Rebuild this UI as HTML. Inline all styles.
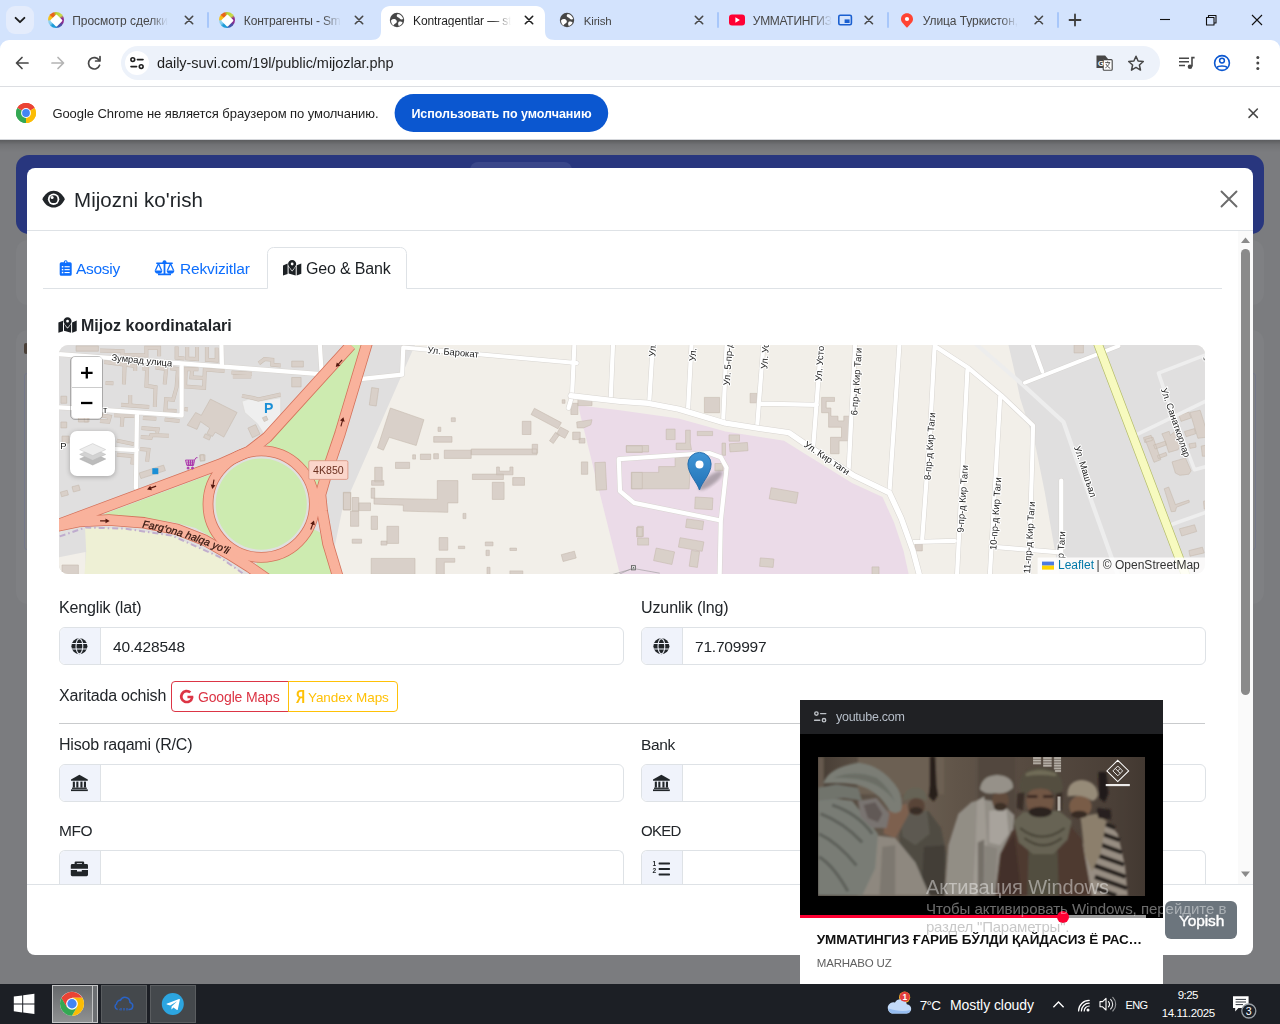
<!DOCTYPE html>
<html><head><meta charset="utf-8">
<title>Kontragentlar</title>
<style>
*{box-sizing:border-box;margin:0;padding:0}
html,body{width:1280px;height:1024px;overflow:hidden;background:#7b7c7f;font-family:"Liberation Sans",sans-serif;}
.a{position:absolute}
.t{position:absolute;white-space:pre;line-height:1;z-index:5}
svg{position:absolute;overflow:visible}
#tabbar{left:0;top:0;width:1280px;height:52px;background:#d3e3fd}
#toolbar{left:0;top:40px;width:1280px;height:47px;background:#fff;border-bottom:1px solid #dcdee2;border-radius:9px 9px 0 0}
#omni{left:121px;top:46px;width:1039px;height:34px;border-radius:17px;background:#edf2fa}
#infobar{left:0;top:87px;width:1280px;height:53px;background:#fff;border-bottom:1px solid #d5d7db}
#page{left:0;top:140px;width:1280px;height:844px;background:#7b7c7f;overflow:hidden}
#taskbar{left:0;top:984px;width:1280px;height:40px;background:#1c1f25}
.tabfade{-webkit-mask-image:linear-gradient(90deg,#000 0,#000 82%,transparent 100%);mask-image:linear-gradient(90deg,#000 0,#000 82%,transparent 100%)}
.tabfade2{-webkit-mask-image:linear-gradient(90deg,#000 0,#000 78%,transparent 100%);mask-image:linear-gradient(90deg,#000 0,#000 78%,transparent 100%)}
.sep{position:absolute;top:12px;width:2px;height:16px;background:#a8c7fa;border-radius:1px}
.fav{position:absolute;width:16px;height:16px;border-radius:50%;top:12px;background:conic-gradient(from 0deg,#b5d334 0deg,#c8dc4a 50deg,#8e2a8e 75deg,#8e2a8e 110deg,#4a4fa6 135deg,#3b5db5 165deg,#1d9cd8 185deg,#1d9cd8 215deg,#7ecbf0 235deg,#8fd3f2 262deg,#f5c018 275deg,#f5c018 300deg,#e8641b 315deg,#e8641b 340deg,#b5d334 360deg)}
.fav:after{content:"";position:absolute;left:3.6px;top:3.6px;width:8.8px;height:8.8px;background:#fff;transform:rotate(45deg);border-radius:1px}
</style></head><body>
<!-- ===== CHROME UI ===== -->
<div class="a" id="tabbar"></div>
<div class="a" id="toolbar"></div>
<div class="a" id="omni"></div>
<div class="a" id="infobar"></div>
<!-- tab search button -->
<div class="a" style="left:6px;top:6px;width:28px;height:28px;border-radius:9px;background:#e4ecfc"></div>
<svg style="left:0;top:0" width="1280" height="140" viewBox="0 0 1280 140">
 <!-- tab search chevron -->
 <path d="M15.6 17.8 L20 22.2 L24.4 17.8" fill="none" stroke="#1f1f1f" stroke-width="1.9" stroke-linecap="round" stroke-linejoin="round"/>
 <!-- active tab -->
 <path d="M371 40 C378 40 381 37 381 31 L381 15 C381 9.5 385 6 390 6 L536 6 C541 6 545 9.5 545 15 L545 31 C545 37 548 40 555 40 Z" fill="#fff"/>
 <!-- tab close X -->
 <g stroke="#474747" stroke-width="1.6" stroke-linecap="round" fill="none">
  <path d="M185.3 16.3 l7.4 7.4 m0 -7.4 l-7.4 7.4"/>
  <path d="M355.3 16.3 l7.4 7.4 m0 -7.4 l-7.4 7.4"/>
  <path d="M695.3 16.3 l7.4 7.4 m0 -7.4 l-7.4 7.4"/>
  <path d="M865.1 16.3 l7.4 7.4 m0 -7.4 l-7.4 7.4"/>
  <path d="M1035.1 16.3 l7.4 7.4 m0 -7.4 l-7.4 7.4"/>
 </g>
 <path d="M525.3 16.3 l7.4 7.4 m0 -7.4 l-7.4 7.4" stroke="#1f1f1f" stroke-width="1.6" stroke-linecap="round" fill="none"/>
 <!-- new tab plus -->
 <path d="M1069.5 20 h11 M1075 14.5 v11" stroke="#3c3c3c" stroke-width="1.8" stroke-linecap="round" fill="none"/>
 <!-- window controls -->
 <path d="M1160 19.5 h10" stroke="#111" stroke-width="1.1" fill="none"/>
 <path d="M1206.5 17.5 h7.5 v7.5 h-7.5 z M1208.5 17.3 v-1.8 h7.5 v7.5 h-1.8" stroke="#111" stroke-width="1.1" fill="none" stroke-linejoin="round"/>
 <path d="M1252 15 l10 10 m0 -10 l-10 10" stroke="#111" stroke-width="1.1" fill="none"/>
 <!-- globe favicons (active + Kirish) -->
 <g id="globe1" transform="translate(397,20)">
  <circle r="7.2" fill="#474747"/>
  <path d="M-5.9 0.2 C-4.2 -1.6 -1.6 -1.4 -0.6 0.2 C0.4 1.8 -0.4 2.8 -1.6 3.4 C-2.8 4 -3.2 5 -3.6 5.6 C-5.2 4.2 -6.1 2.2 -5.9 0.2 Z" fill="#fff"/>
  <path d="M0.8 -6.1 C3.6 -5.8 5.7 -3.7 6.1 -1 C5 -0.1 3.5 -0.5 2.7 -1.6 C1.9 -2.8 0.5 -2.5 -0.1 -3.6 C-0.6 -4.6 0 -5.6 0.8 -6.1 Z" fill="#fff"/>
  <path d="M2 1.6 C3.4 1.2 5 1.8 5.6 2.8 C4.8 4.4 3.4 5.6 1.8 6 C0.8 4.8 0.8 2.6 2 1.6 Z" fill="#fff"/>
 </g>
 <use href="#globe1" x="170" y="0"/>
 <!-- youtube favicon -->
 <rect x="729" y="14.4" width="16" height="11.2" rx="3" fill="#ff0033"/>
 <path d="M735.4 17.2 L739.9 20 L735.4 22.8 Z" fill="#fff"/>
 <!-- PiP indicator -->
 <rect x="838.8" y="15.3" width="12.6" height="9.4" rx="1.4" fill="none" stroke="#1a5fd0" stroke-width="1.6"/>
 <rect x="844.6" y="19.4" width="5" height="3.6" fill="#1a5fd0"/>
 <!-- yandex maps pin -->
 <path d="M907 13.2 C903.6 13.2 901 15.8 901 19 C901 22.2 903.6 23.8 907 27.8 C910.4 23.8 913 22.2 913 19 C913 15.8 910.4 13.2 907 13.2 Z" fill="#ff4433"/>
 <circle cx="907" cy="19" r="2.1" fill="#fff"/>
 <!-- toolbar nav -->
 <path d="M28 63 H17 M22 57.5 L16.5 63 L22 68.5" stroke="#474747" stroke-width="1.7" fill="none" stroke-linecap="round" stroke-linejoin="round"/>
 <path d="M52 63 H63 M58 57.5 L63.5 63 L58 68.5" stroke="#b4b4b4" stroke-width="1.7" fill="none" stroke-linecap="round" stroke-linejoin="round"/>
 <path d="M99.2 60.5 A5.7 5.7 0 1 0 99.6 65.2" stroke="#474747" stroke-width="1.7" fill="none" stroke-linecap="round"/>
 <path d="M100 56.6 V61 H95.6" stroke="#474747" stroke-width="1.7" fill="none" stroke-linecap="round" stroke-linejoin="round"/>
 <!-- site info -->
 <circle cx="137" cy="63" r="12" fill="#fff"/>
 <g stroke="#1f1f1f" stroke-width="1.6" fill="none" stroke-linecap="round">
  <circle cx="132.8" cy="59.6" r="1.9"/><path d="M137.4 59.6 H143"/>
  <circle cx="141.2" cy="66.6" r="1.9"/><path d="M131 66.6 H136.6"/>
 </g>
 <!-- translate icon -->
 <g>
  <path d="M1096.5 55.6 h8.6 l2.4 2.6 v9.8 h-11 z" fill="#474747"/>
  <rect x="1103.2" y="59.6" width="9" height="10.6" rx="1" fill="#fff" stroke="#474747" stroke-width="1.1"/>
  <text x="1098" y="65.6" font-size="7.5" font-weight="700" fill="#fff" font-family="Liberation Sans">G</text>
  <path d="M1105.2 62.6 h5 M1107.7 61.4 v1.2 M1109.4 62.8 c-0.6 2.4 -2.2 4 -4 5 M1106 64 c0.8 1.8 2.2 3.2 4.2 4.4" stroke="#474747" stroke-width="0.9" fill="none"/>
 </g>
 <!-- star -->
 <path d="M1136 56.2 L1138.1 61 L1143.3 61.5 L1139.4 65 L1140.5 70.1 L1136 67.4 L1131.5 70.1 L1132.6 65 L1128.7 61.5 L1133.9 61 Z" fill="none" stroke="#474747" stroke-width="1.5" stroke-linejoin="round"/>
 <!-- media control -->
 <g stroke="#474747" stroke-width="1.5" fill="none">
  <path d="M1179 58.2 h10 M1179 61.8 h10 M1179 65.4 h6"/>
  <path d="M1192 66.6 V57.6 h2.6" stroke-width="1.6"/>
 </g>
 <circle cx="1190" cy="66.8" r="2.3" fill="#474747"/>
 <!-- profile -->
 <circle cx="1222" cy="63" r="7.4" fill="none" stroke="#0b57d0" stroke-width="1.6"/>
 <circle cx="1222" cy="60.6" r="2.4" fill="none" stroke="#0b57d0" stroke-width="1.5"/>
 <path d="M1216.8 67.6 C1218.4 65.4 1225.6 65.4 1227.2 67.6" fill="none" stroke="#0b57d0" stroke-width="1.5"/>
 <!-- menu dots -->
 <circle cx="1257.8" cy="57.6" r="1.5" fill="#474747"/><circle cx="1257.8" cy="63" r="1.5" fill="#474747"/><circle cx="1257.8" cy="68.4" r="1.5" fill="#474747"/>
 <!-- chrome logo infobar -->
 <g transform="translate(26,113)">
  <circle r="10" fill="#fff"/>
  <path d="M0 0 L-8.66 -5 A10 10 0 0 1 8.66 -5 Z" fill="#ea4335"/>
  <path d="M0 0 L8.66 -5 A10 10 0 0 1 0 10 Z" fill="#fbbc04"/>
  <path d="M0 0 L0 10 A10 10 0 0 1 -8.66 -5 Z" fill="#34a853"/>
  <path d="M-8.66 -5 A10 10 0 0 1 8.66 -5 L0 -5 Z" fill="#ea4335"/>
  <path d="M8.66 -5 A10 10 0 0 1 0 10 L4.33 2.5 Z" fill="#fbbc04"/>
  <path d="M0 10 A10 10 0 0 1 -8.66 -5 L-4.33 2.5 Z" fill="#34a853"/>
  <circle r="4.9" fill="#fff"/>
  <circle r="3.9" fill="#4285f4"/>
 </g>
 <!-- infobar button -->
 <rect x="394.6" y="94" width="213.6" height="38" rx="19" fill="#0b57d0"/>
 <!-- infobar close -->
 <path d="M1249 109 l8.4 8.4 m0 -8.4 l-8.4 8.4" stroke="#474747" stroke-width="1.5" stroke-linecap="round" fill="none"/>
</svg>
<div class="sep" style="left:207px"></div>
<div class="sep" style="left:717px"></div>
<div class="sep" style="left:887px"></div>
<div class="sep" style="left:1057px"></div>
<div class="fav" style="left:48px"></div>
<div class="fav" style="left:219px"></div>
<div class="t tabfade" style="left:72.2px;top:15.00px;font-size:12.0px;color:#474747;letter-spacing:-0.038px;">Просмотр сделки</div>
<div class="t tabfade" style="left:243.8px;top:15.00px;font-size:12.0px;color:#474747;letter-spacing:-0.159px;">Контрагенты - Sm</div>
<div class="t tabfade" style="left:413.0px;top:15.00px;font-size:12.0px;color:#1f1f1f;letter-spacing:-0.087px;">Kontragentlar — st</div>
<div class="t" style="left:583.8px;top:16.00px;font-size:11.5px;color:#474747;letter-spacing:-0.194px;">Kirish</div>
<div class="t tabfade2" style="left:752.8px;top:15.00px;font-size:12.0px;color:#474747;letter-spacing:-0.279px;">УММАТИНГИЗ</div>
<div class="t tabfade" style="left:922.8px;top:15.00px;font-size:12.0px;color:#474747;letter-spacing:-0.085px;">Улица Туркистон,</div>
<div class="t" style="left:157.0px;top:56.00px;font-size:14.5px;color:#1f1f1f;letter-spacing:-0.051px;">daily-suvi.com/19l/public/mijozlar.php</div>
<div class="t" style="left:52.4px;top:107.00px;font-size:13.0px;color:#1f1f1f;letter-spacing:-0.057px;">Google Chrome не является браузером по умолчанию.</div>
<div class="t" style="left:411.4px;top:108.00px;font-size:12.5px;color:#ffffff;font-weight:700;letter-spacing:-0.045px;">Использовать по умолчанию</div>
<div class="t" style="left:73.8px;top:190.00px;font-size:20.5px;color:#212529;letter-spacing:0.054px;will-change:transform;">Mijozni ko'rish</div>
<div class="t" style="left:76.0px;top:261.00px;font-size:15.5px;color:#0d6efd;letter-spacing:-0.292px;will-change:transform;">Asosiy</div>
<div class="t" style="left:179.5px;top:261.00px;font-size:15.5px;color:#0d6efd;letter-spacing:-0.154px;will-change:transform;">Rekvizitlar</div>
<div class="t" style="left:305.8px;top:261.00px;font-size:16.0px;color:#1b1f23;letter-spacing:-0.178px;will-change:transform;">Geo &amp; Bank</div>
<div class="t" style="left:81.2px;top:318.00px;font-size:16.0px;color:#212529;font-weight:700;letter-spacing:0.028px;will-change:transform;">Mijoz koordinatalari</div>
<div class="t" style="left:58.9px;top:600.00px;font-size:16.0px;color:#212529;letter-spacing:-0.153px;will-change:transform;">Kenglik (lat)</div>
<div class="t" style="left:641.0px;top:600.00px;font-size:16.0px;color:#212529;letter-spacing:-0.109px;will-change:transform;">Uzunlik (lng)</div>
<div class="t" style="left:112.8px;top:639.00px;font-size:15.5px;color:#212529;letter-spacing:-0.153px;will-change:transform;">40.428548</div>
<div class="t" style="left:695.0px;top:639.00px;font-size:15.5px;color:#212529;letter-spacing:-0.209px;will-change:transform;">71.709997</div>
<div class="t" style="left:58.9px;top:688.00px;font-size:16.0px;color:#212529;letter-spacing:-0.213px;will-change:transform;">Xaritada ochish</div>
<div class="t" style="left:198.0px;top:690.00px;font-size:14.0px;color:#dc3545;letter-spacing:-0.153px;will-change:transform;">Google Maps</div>
<div class="t" style="left:308.2px;top:691.00px;font-size:13.5px;color:#ffc107;letter-spacing:-0.069px;will-change:transform;">Yandex Maps</div>
<div class="t" style="left:58.9px;top:737.00px;font-size:16.0px;color:#212529;letter-spacing:-0.201px;will-change:transform;">Hisob raqami (R/C)</div>
<div class="t" style="left:641.0px;top:737.00px;font-size:15.5px;color:#212529;letter-spacing:-0.382px;will-change:transform;">Bank</div>
<div class="t" style="left:58.9px;top:823.00px;font-size:15.5px;color:#212529;letter-spacing:-0.379px;will-change:transform;">MFO</div>
<div class="t" style="left:641.0px;top:823.00px;font-size:15.0px;color:#212529;letter-spacing:-0.727px;will-change:transform;">OKED</div>
<div class="t" style="left:1179.0px;top:913.00px;font-size:15.5px;color:#ffffff;letter-spacing:-0.128px;will-change:transform;z-index:5;-webkit-text-stroke:0.4px #fff;">Yopish</div>
<div class="t" style="left:836.0px;top:711.00px;font-size:12.5px;color:#b6bec8;letter-spacing:-0.261px;z-index:9;">youtube.com</div>
<div class="t" style="left:816.8px;top:933.00px;font-size:13.5px;color:#0f0f0f;font-weight:700;letter-spacing:-0.102px;z-index:9;">УММАТИНГИЗ ҒАРИБ БЎЛДИ ҚАЙДАСИЗ Ё РАС…</div>
<div class="t" style="left:816.8px;top:958.00px;font-size:11.5px;color:#606060;letter-spacing:-0.198px;z-index:9;">MARHABO UZ</div>
<div class="t" style="left:925.6px;top:877.00px;font-size:20.0px;color:rgba(255,255,255,0.44);letter-spacing:-0.090px;will-change:transform;z-index:12;">Активация Windows</div>
<div class="t" style="left:925.6px;top:901.00px;font-size:15.0px;color:rgba(255,255,255,0.42);letter-spacing:-0.032px;will-change:transform;z-index:12;">Чтобы активировать Windows, перейдите в</div>
<div class="t" style="left:925.6px;top:919.00px;font-size:15.0px;color:rgba(150,150,150,0.52);letter-spacing:-0.219px;will-change:transform;z-index:12;">раздел "Параметры".</div>
<div class="t" style="left:919.7px;top:999.00px;font-size:13.5px;color:#ffffff;letter-spacing:-0.620px;z-index:12;">7°C</div>
<div class="t" style="left:950.0px;top:998.00px;font-size:14.0px;color:#ffffff;letter-spacing:-0.062px;z-index:12;">Mostly cloudy</div>
<div class="t" style="left:1125.5px;top:1000.00px;font-size:11.0px;color:#ffffff;letter-spacing:-0.583px;z-index:12;">ENG</div>
<div class="t" style="left:1177.7px;top:990.00px;font-size:11.5px;color:#ffffff;letter-spacing:-0.522px;z-index:12;">9:25</div>
<div class="t" style="left:1161.7px;top:1008.00px;font-size:11.5px;color:#ffffff;letter-spacing:-0.351px;z-index:12;">14.11.2025</div>
<!-- ===== PAGE (dimmed) + MODAL ===== -->
<div class="a" id="page">
 <div class="a" style="left:0;top:0;width:1280px;height:12px;background:linear-gradient(180deg,rgba(0,0,0,0.26),rgba(0,0,0,0.08) 40%,rgba(0,0,0,0));z-index:1"></div>
 <!-- dimmed page behind: header bar + cards -->
 <div class="a" style="left:16px;top:15px;width:1248px;height:79px;border-radius:13px;background:#28367e"></div>
 <div class="a" style="left:470px;top:22px;width:102px;height:30px;border-radius:8px;background:#3a478a"></div>
 <div class="a" style="left:16px;top:100px;width:1248px;height:65px;border-radius:12px;background:#7f8083"></div>
 <div class="a" style="left:16px;top:190px;width:1248px;height:274px;border-radius:12px;background:#7f8083"></div>
 <div class="a" style="left:24px;top:233px;width:1232px;height:177px;border:1px solid #75788a;border-radius:3px"></div>
 <div class="a" style="left:24px;top:203px;width:4px;height:11px;background:#4a4038;border-radius:2px"></div>
 <!-- modal -->
 <div class="a" id="modal" style="left:27px;top:28px;width:1226px;height:787px;background:#fff;border-radius:8px;overflow:hidden">
  <div class="a" style="left:0;top:62px;width:1226px;height:1px;background:#dee2e6"></div>
  <div class="a" style="left:0;top:715.5px;width:1226px;height:1px;background:#dee2e6"></div>
  <!-- scroll track -->
  <div class="a" style="left:1211px;top:63px;width:15px;height:652.5px;background:#fafafa"></div>
  <div class="a" style="left:1214px;top:81px;width:9px;height:446px;border-radius:5px;background:#8a8a8a"></div>
 </div>
</div>
<svg style="left:0;top:0;z-index:4" width="1280" height="1024" viewBox="0 0 1280 1024">
 <!-- scroll arrows -->
 <path d="M1241 243 L1245.5 237.5 L1250 243 Z" fill="#8a8a8a"/>
 <path d="M1241 871.5 L1245.5 877 L1250 871.5 Z" fill="#8a8a8a"/>
 <!-- modal close -->
 <path d="M1221.5 191.5 l15 15 m0 -15 l-15 15" stroke="#6b6b6b" stroke-width="1.9" fill="none" stroke-linecap="round"/>
 <!-- eye icon -->
 <g transform="translate(53.6,199.2)">
  <path d="M-11.3 0 C-8.8 -5.2 -4.6 -8.4 0 -8.4 C4.6 -8.4 8.8 -5.2 11.3 0 C8.8 5.2 4.6 8.4 0 8.4 C-4.6 8.4 -8.8 5.2 -11.3 0 Z" fill="#212529"/>
  <circle r="5.7" fill="#fff"/><circle r="3.9" fill="#212529"/><circle cx="-1.5" cy="-1.6" r="1.5" fill="#fff"/>
 </g>
 <!-- tabs border -->
 <path d="M43 288.5 H267.5 M406.5 288.5 H1222" stroke="#dee2e6" stroke-width="1" fill="none"/>
 <path d="M267.5 288.5 V253.5 a6 6 0 0 1 6 -6 H400.5 a6 6 0 0 1 6 6 V288.5" stroke="#dee2e6" stroke-width="1" fill="none"/>
 <!-- clipboard icon (Asosiy) -->
 <g fill="#0d6efd">
  <path d="M61.2 262.2 h2.6 a1.9 1.9 0 0 1 2.9 -1.7 a1.9 1.9 0 0 1 0.9 1.7 h2.6 a1.5 1.5 0 0 1 1.5 1.5 v10.6 a1.5 1.5 0 0 1 -1.5 1.5 h-9 a1.5 1.5 0 0 1 -1.5 -1.5 v-10.6 a1.5 1.5 0 0 1 1.5 -1.5 z"/>
 </g>
 <g fill="#fff"><circle cx="65.7" cy="262.1" r="0.8"/>
  <rect x="61.8" y="266" width="1.5" height="1.5"/><rect x="64.5" y="266.2" width="5.2" height="1.1"/>
  <rect x="61.8" y="268.9" width="1.5" height="1.5"/><rect x="64.5" y="269.1" width="5.2" height="1.1"/>
  <rect x="61.8" y="271.8" width="1.5" height="1.5"/><rect x="64.5" y="272" width="5.2" height="1.1"/>
 </g>
 <!-- balance scale (Rekvizitlar) -->
 <g fill="#0d6efd" stroke="none">
  <rect x="163.6" y="261" width="1.8" height="13"/>
  <rect x="158" y="273.4" width="13" height="1.9" rx="0.5"/>
  <rect x="156.2" y="262.4" width="16.6" height="1.7" rx="0.5"/>
  <circle cx="164.5" cy="262.2" r="2"/>
  <path d="M154.6 270.4 h7.8 c0 2 -1.7 3.3 -3.9 3.3 c-2.2 0 -3.9 -1.3 -3.9 -3.3 z"/>
  <path d="M166.6 270.4 h7.8 c0 2 -1.7 3.3 -3.9 3.3 c-2.2 0 -3.9 -1.3 -3.9 -3.3 z"/>
 </g>
 <g fill="none" stroke="#0d6efd" stroke-width="1.3" stroke-linejoin="round">
  <path d="M155.4 270.4 L158.5 263.6 L161.6 270.4"/><path d="M167.4 270.4 L170.5 263.6 L173.6 270.4"/>
 </g>
 <!-- map-marked icon (Geo tab) -->
 <g id="mapicon" transform="translate(283,260)">
  <path d="M0 5.4 L4.6 3.6 V14 L0 15.6 Z" fill="#1b1f23"/>
  <path d="M18.3 3.4 L13.7 5.2 V15.6 L18.3 13.8 Z" fill="#1b1f23"/>
  <path d="M5.6 6.2 C6.4 8 7.8 9.8 9.15 11.4 C10.5 9.8 11.9 8 12.7 6.2 V15.6 L5.6 13.6 Z" fill="#1b1f23"/>
  <path d="M9.15 0 C6.9 0 5.1 1.8 5.1 4 C5.1 5.8 7.6 8.8 9.15 10.4 C10.7 8.8 13.2 5.8 13.2 4 C13.2 1.8 11.4 0 9.15 0 Z M9.15 2.6 a1.4 1.4 0 1 1 0 2.8 a1.4 1.4 0 0 1 0 -2.8 z" fill="#1b1f23" fill-rule="evenodd"/>
 </g>
 <use href="#mapicon" x="-224.6" y="57.2"/>
</svg>
<!-- input groups -->
<style>
.ig{position:absolute;overflow:hidden;height:38px;border:1px solid #dee2e6;border-radius:6px;background:#fff;z-index:3}
.ig i{position:absolute;left:0;top:0;width:41px;height:36px;background:#f0f3fb;border-right:1px solid #dee2e6;border-radius:5px 0 0 5px}
</style>
<div class="ig" style="left:59px;top:627px;width:565px"><i></i></div>
<div class="ig" style="left:640.5px;top:627px;width:565px"><i></i></div>
<div class="ig" style="left:59px;top:764px;width:565px"><i></i></div>
<div class="ig" style="left:640.5px;top:764px;width:565px"><i></i></div>
<div class="ig" style="left:59px;top:850px;width:565px;height:33.6px;border-bottom:0;border-radius:6px 6px 0 0"><i style="border-radius:5px 0 0 0"></i></div>
<div class="ig" style="left:640.5px;top:850px;width:565px;height:33.6px;border-bottom:0;border-radius:6px 6px 0 0"><i style="border-radius:5px 0 0 0"></i></div>
<!-- hr -->
<div class="a" style="left:59px;top:723px;width:1146px;height:1px;background:#c9cbcd;z-index:3"></div>
<!-- map buttons -->
<div class="a" style="left:171px;top:681px;width:118px;height:31px;border:1px solid #dc3545;border-radius:4px 0 0 4px;z-index:3"></div>
<div class="a" style="left:288px;top:681px;width:110px;height:31px;border:1px solid #ffc107;border-radius:0 4px 4px 0;z-index:3"></div>
<!-- Yopish button -->
<div class="a" style="left:1165px;top:901px;width:72px;height:38px;border-radius:6px;background:#6c757d;z-index:3"></div>
<!-- MAP -->
<div class="a" id="map" style="will-change:transform;left:59px;top:345px;width:1146px;height:229px;border-radius:9px;overflow:hidden;background:#f2efe9;z-index:3">
<svg width="1146" height="229" viewBox="0 0 1146 229" style="left:0;top:0">
<polygon points="0,0 356,0 283,166 275,205 278,229 0,229" fill="#e0dfdf"/>
<polygon points="949.4,-0.3 955.3,25.5 961.2,53.6 976.4,100.5 985.8,147.3 995.1,201.2 1001.0,231.7 1155.7,231.7 1155.7,-0.3" fill="#e0dfdf"/>
<polygon points="-4.0,213.0 26.5,207.1 26.5,231.7 -4.0,231.7" fill="#f2efe9"/>
<polygon points="26.0,182.5 66.3,183.7 113.2,190.7 160.1,211.8 188.2,231.7 25.3,231.7 27.2,205.9" fill="#eef0d5"/>
<polygon points="518.9,60.2 561.0,65.3 619.6,73.5 666.5,86.4 725.1,95.8 743.8,107.5 793.0,138.0 823.5,152.0 835.2,177.8 844.6,205.9 850.2,231.7 561.5,231.7" fill="#ebdbe8"/>
<polygon points="44.0,169.6 161.2,125.8 202.2,159.1 160.1,196.6 136.6,183.0 113.2,177.1 78.0,172.4 54.6,170.8" fill="#cdebb0"/>
<polygon points="205.3,103.3 291.8,-0.3 307.7,-0.3 281.0,88.7 263.2,147.3 202.2,159.1" fill="#cdebb0"/>
<polygon points="202.2,159.1 260.8,187.2 274.9,231.7 210.5,231.7 197.6,220.0" fill="#cdebb0"/>
<polygon points="183.0,56.3 190.1,54.1 199.9,56.3 221.7,52.7 221.7,76.6 205.5,90.0 198.5,78.8 185.8,67.5" fill="#efefef" stroke="#d9d6d3" stroke-width="0.5"/>
<path d="M41.0 5.6 L63.5 6.3 L63.5 9.8 L87.4 10.5 L87.4 2.8 L100.1 2.8 L100.1 11.3  M117.6 1.4 L117.6 12.7 L125.4 13.4  M128.2 2.1 L128.2 13.4 L138.0 14.1 L138.0 2.1  M147.9 2.1 L147.9 14.8 L157.7 15.5 L157.7 2.8  M45.2 16.9 L76.2 21.1 L76.2 26.0  M65.6 21.1 L64.9 39.4  M46.6 38.0 L54.4 38.3  M83.2 23.2 L88.1 23.9 L87.4 40.8 L96.5 42.2 L95.8 61.9  M96.5 22.5 L107.1 23.9 L105.7 39.4  M111.3 23.2 L119.0 23.9 L117.6 42.2 L114.1 54.8 L107.1 54.1 L106.4 65.4 L117.6 66.1  M71.2 49.9 L71.2 59.1  M62.1 59.8 L90.2 61.9  M165.5 26.0 L145.8 24.6 L145.1 42.9 L126.1 41.5 L126.8 23.9 L139.4 24.2  M133.1 25.3 L132.4 32.3 L145.1 33.0  M172.5 27.4 L192.9 28.8  M173.9 31.6 L192.2 31.6  M199.9 18.3 L205.5 14.1 L213.3 14.8 L213.3 19.7 L221.7 20.4  M125.4 64.0 L128.9 64.4  M41.0 70.3 L50.8 71.7 L49.4 76.6 L41.0 75.9  M55.1 70.3 L76.2 71.0  M63.5 71.7 L62.8 81.6  M83.9 73.1 L97.3 73.8  M105.7 74.5 L120.5 75.9  M82.5 83.0 L98.7 84.4 L98.0 87.9  M81.8 92.1 L91.6 92.8 L92.3 90.0 L109.9 90.7  M57.9 95.6 L74.8 99.1  M81.1 104.1 L89.5 104.8 L88.1 116.7  M57.9 109.7 L74.0 111.1 L73.3 119.5  M183.0 50.9 L194.3 53.0 L199.2 54.4 L221.7 49.5 " fill="none" stroke="#c9beb3" stroke-width="4.0" stroke-linejoin="miter"/>
<path d="M41.0 5.6 L63.5 6.3 L63.5 9.8 L87.4 10.5 L87.4 2.8 L100.1 2.8 L100.1 11.3  M117.6 1.4 L117.6 12.7 L125.4 13.4  M128.2 2.1 L128.2 13.4 L138.0 14.1 L138.0 2.1  M147.9 2.1 L147.9 14.8 L157.7 15.5 L157.7 2.8  M45.2 16.9 L76.2 21.1 L76.2 26.0  M65.6 21.1 L64.9 39.4  M46.6 38.0 L54.4 38.3  M83.2 23.2 L88.1 23.9 L87.4 40.8 L96.5 42.2 L95.8 61.9  M96.5 22.5 L107.1 23.9 L105.7 39.4  M111.3 23.2 L119.0 23.9 L117.6 42.2 L114.1 54.8 L107.1 54.1 L106.4 65.4 L117.6 66.1  M71.2 49.9 L71.2 59.1  M62.1 59.8 L90.2 61.9  M165.5 26.0 L145.8 24.6 L145.1 42.9 L126.1 41.5 L126.8 23.9 L139.4 24.2  M133.1 25.3 L132.4 32.3 L145.1 33.0  M172.5 27.4 L192.9 28.8  M173.9 31.6 L192.2 31.6  M199.9 18.3 L205.5 14.1 L213.3 14.8 L213.3 19.7 L221.7 20.4  M125.4 64.0 L128.9 64.4  M41.0 70.3 L50.8 71.7 L49.4 76.6 L41.0 75.9  M55.1 70.3 L76.2 71.0  M63.5 71.7 L62.8 81.6  M83.9 73.1 L97.3 73.8  M105.7 74.5 L120.5 75.9  M82.5 83.0 L98.7 84.4 L98.0 87.9  M81.8 92.1 L91.6 92.8 L92.3 90.0 L109.9 90.7  M57.9 95.6 L74.8 99.1  M81.1 104.1 L89.5 104.8 L88.1 116.7  M57.9 109.7 L74.0 111.1 L73.3 119.5  M183.0 50.9 L194.3 53.0 L199.2 54.4 L221.7 49.5 " fill="none" stroke="#d9d0c9" stroke-width="3.0" stroke-linejoin="miter"/>
<path d="M17.1 0.9 L39.4 0.9 L39.4 6.2 L17.1 6.2Z M1.9 51.2 L7.7 51.2 L7.7 58.3 L1.9 58.3Z M1.9 77.0 L7.7 77.0 L7.7 82.9 L1.9 82.9Z M19.4 72.3 L28.8 72.3 L28.8 77.0 L19.4 77.0Z M3.0 91.1 L10.1 91.1 L10.1 98.1 L3.0 98.1Z M25.3 65.3 L30.0 65.3 L30.0 77.0 L25.3 77.0Z M284.3 147.3 L291.8 147.3 L291.8 164.9 L284.3 164.9Z M3.0 220.0 L19.4 220.0 L19.4 229.4 L3.0 229.4Z M232.7 16.1 L244.4 16.1 L244.4 22.0 L232.7 22.0Z M232.7 32.5 L242.1 32.5 L242.1 41.9 L232.7 41.9Z M141.3 109.8 L146.0 109.8 L146.0 115.7 L141.3 115.7Z M80.1 128.0 L104.6 120.1 L106.4 125.6 L81.9 133.6Z M13.0 141.8 L19.8 140.0 L21.2 145.2 L14.4 147.0Z M1.4 147.2 L8.2 145.3 L9.4 149.9 L2.6 151.7Z M151.4 54.1 L178.1 67.5 L164.8 92.1 L156.3 87.2 L153.5 91.4 L147.9 88.6 L150.7 83.0 L141.5 76.6 L138.0 84.4 L128.2 80.2 L136.6 67.5 L142.3 70.3Z M188.9 83.1 L196.6 79.6 L201.0 89.1 L193.4 92.7Z M203.4 72.8 L207.3 71.0 L209.0 74.8 L205.2 76.6Z M140.3 110.1 L144.5 109.4 L145.6 115.6 L141.4 116.3Z M146.2 88.8 L151.9 91.5 L150.3 95.1 L144.5 92.4Z M331.4 63.0 L364.9 74.7 L357.2 100.5 L330.2 92.3 L324.4 105.2 L318.5 102.8Z M312.7 42.6 L319.7 43.6 L317.2 61.0 L310.3 60.0Z M374.7 91.6 L393.0 91.6 L393.0 97.2 L374.7 97.2Z M392.3 72.8 L396.3 72.8 L396.3 76.6 L392.3 76.6Z M379.0 82.2 L381.8 82.2 L381.8 86.4 L379.0 86.4Z M385.3 105.2 L412.2 105.2 L412.2 113.4 L385.3 113.4Z M412.2 104.0 L477.9 104.0 L477.9 109.8 L412.2 109.8Z M473.2 99.3 L478.6 99.3 L478.6 108.2 L473.2 108.2Z M353.7 109.8 L356.5 109.8 L356.5 114.1 L353.7 114.1Z M361.4 109.1 L371.7 109.1 L371.7 114.5 L361.4 114.5Z M374.7 108.7 L379.4 108.7 L379.4 113.8 L374.7 113.8Z M336.5 117.3 L350.6 117.3 L350.6 123.4 L336.5 123.4Z M315.7 122.3 L323.2 122.3 L323.2 136.8 L315.7 136.8Z M312.6 135.6 L324.8 135.6 L324.8 140.3 L312.6 140.3Z M312.2 143.1 L315.7 143.1 L315.7 153.2 L312.2 153.2Z M413.4 129.1 L444.4 129.1 L444.4 134.5 L413.4 134.5Z M453.7 132.6 L465.5 132.6 L465.5 140.3 L453.7 140.3Z M433.3 137.3 L445.1 137.3 L445.1 154.4 L433.3 154.4Z M284.5 147.8 L291.5 147.8 L291.5 164.9 L284.5 164.9Z M293.2 152.5 L299.7 152.5 L299.7 166.1 L293.2 166.1Z M299.7 157.9 L311.5 157.9 L311.5 165.6 L299.7 165.6Z M291.5 166.1 L299.7 166.1 L299.7 181.3 L291.5 181.3Z M312.2 171.2 L318.5 171.2 L318.5 184.4 L312.2 184.4Z M327.9 181.3 L339.6 181.3 L339.6 198.4 L327.9 198.4Z M322.0 196.1 L327.9 196.1 L327.9 200.1 L322.0 200.1Z M293.2 194.2 L302.6 194.2 L302.6 198.2 L293.2 198.2Z M380.1 192.6 L388.8 192.6 L388.8 205.2 L380.1 205.2Z M399.4 201.2 L405.7 201.2 L405.7 203.6 L399.4 203.6Z M426.3 197.0 L434.0 197.0 L434.0 200.8 L426.3 200.8Z M427.0 205.2 L430.3 205.2 L430.3 210.6 L427.0 210.6Z M450.9 203.1 L457.5 203.1 L457.5 205.5 L450.9 205.5Z M312.2 213.4 L356.0 213.4 L356.0 229.4 L312.2 229.4Z M428.0 222.3 L431.0 222.3 L431.0 229.4 L428.0 229.4Z M450.9 225.9 L463.8 225.9 L463.8 229.4 L450.9 229.4Z M463.3 76.3 L472.0 76.3 L472.0 89.5 L463.3 89.5Z M511.9 58.3 L518.9 58.3 L518.9 69.5 L511.9 69.5Z M518.9 52.4 L533.0 52.4 L533.0 60.6 L518.9 60.6Z M513.7 87.1 L521.2 87.1 L521.2 94.6 L513.7 94.6Z M520.1 93.4 L525.9 93.4 L525.9 98.1 L520.1 98.1Z M522.4 116.9 L528.7 116.9 L528.7 129.3 L522.4 129.3Z M567.4 100.9 L583.3 100.9 L583.3 107.5 L567.4 107.5Z M572.3 127.4 L583.3 127.4 L583.3 143.8 L572.3 143.8Z M404.0 168.4 L406.9 168.4 L406.9 173.6 L404.0 173.6Z M503.2 54.8 L506.0 54.8 L506.0 58.3 L503.2 58.3Z M577.5 182.5 L583.3 182.5 L583.3 191.9 L577.5 191.9Z M378.3 135.6 L398.9 135.6 L398.9 157.9 L388.8 157.9 L388.8 167.3 L344.3 166.1 L344.3 160.2 L315.0 159.1 L315.0 153.2 L378.3 154.4Z M437.6 122.0 L440.4 122.0 L440.4 126.2 L450.9 126.2 L450.9 122.0 L454.0 122.0 L454.0 129.8 L437.6 129.8Z M377.1 213.4 L395.8 213.4 L395.8 217.2 L385.3 217.2 L385.3 229.4 L377.1 229.4Z M475.4 63.3 L502.3 77.6 L499.0 83.8 L472.1 69.5Z M501.4 81.9 L509.7 86.3 L505.9 93.3 L497.6 88.9Z M496.6 87.2 L500.4 89.9 L494.3 98.5 L490.5 95.8Z M502.3 209.7 L515.4 206.2 L517.2 213.0 L504.1 216.5Z M535.8 117.6 L546.3 117.1 L547.7 144.7 L537.2 145.3Z M517.7 77.0 L524.7 75.9 L533.0 74.7 L531.8 79.8 L524.7 82.9 L518.2 82.9Z M645.4 52.4 L660.6 52.4 L660.6 67.7 L645.4 67.7Z M691.1 48.4 L698.1 48.4 L698.1 57.8 L691.1 57.8Z M607.2 84.1 L616.1 84.1 L616.1 94.6 L607.2 94.6Z M638.3 86.4 L653.6 86.4 L653.6 90.6 L638.3 90.6Z M670.0 89.9 L680.5 89.9 L680.5 96.2 L670.0 96.2Z M663.0 98.1 L666.5 98.1 L666.5 110.3 L663.0 110.3Z M567.3 100.5 L589.6 100.5 L589.6 107.0 L567.3 107.0Z M655.9 118.5 L664.1 118.5 L664.1 125.8 L655.9 125.8Z M578.6 181.3 L584.4 181.3 L584.4 191.4 L578.6 191.4Z M578.6 193.0 L589.6 193.0 L589.6 200.1 L578.6 200.1Z M813.0 221.9 L820.0 221.9 L820.0 229.4 L813.0 229.4Z M856.3 198.9 L863.3 198.9 L863.3 205.9 L856.3 205.9Z M617.2 98.1 L626.6 98.1 L626.6 85.2 L631.3 85.2 L631.3 98.1 L632.5 104.7 L617.2 104.7Z M670.4 98.8 L688.4 97.5 L689.0 105.7 L671.0 106.9Z M572.7 127.4 L599.7 127.4 L599.7 121.6 L616.1 121.6 L616.1 112.2 L631.3 112.2 L631.3 122.7 L630.1 143.8 L572.7 143.8Z M636.3 152.0 L653.9 153.0 L653.3 164.7 L635.7 163.7Z M627.8 173.9 L644.7 176.2 L643.5 184.8 L626.6 182.4Z M621.1 192.7 L644.9 196.9 L643.2 206.3 L619.4 202.1Z M597.2 203.0 L615.6 206.9 L612.9 219.5 L594.6 215.6Z M632.5 205.4 L640.6 206.6 L638.4 222.4 L630.2 221.2Z M712.2 142.7 L739.2 147.5 L737.2 158.5 L710.2 153.8Z M701.3 212.9 L714.9 214.0 L714.1 222.4 L700.6 221.3Z M762.6 52.4 L775.5 52.4 L775.5 56.4 L767.2 56.4 L767.2 63.0 L771.9 63.0 L771.9 71.2 L779.0 71.2 L779.0 75.9 L784.8 75.9 L784.8 71.2 L790.7 71.2 L790.7 95.8 L780.1 95.8 L780.1 108.7 L771.5 108.7 L771.5 92.3 L782.5 92.3 L782.5 82.2 L769.6 82.2 L769.6 67.7 L762.6 67.7Z M1015.1 -0.3 L1024.4 -0.3 L1024.4 7.9 L1015.1 7.9Z M1086.1 94.4 L1093.9 92.1 L1101.8 114.6 L1095.0 117.3Z M1084.5 92.6 L1092.1 90.3 L1093.5 95.3 L1085.8 97.5Z M1094.6 100.0 L1106.3 96.2 L1107.4 100.0 L1096.2 104.0Z M1098.4 110.6 L1107.0 107.4 L1107.9 110.6 L1099.5 113.7Z M1102.9 88.8 L1110.1 86.3 L1111.4 90.3 L1118.6 83.6 L1124.3 98.9 L1120.9 101.1 L1119.1 104.7 L1109.7 107.4 L1106.3 96.6Z M1119.8 70.1 L1129.9 67.0 L1132.1 73.0 L1122.0 76.4Z M1131.0 67.4 L1141.1 65.2 L1147.9 86.5 L1147.9 92.1 L1138.9 93.3Z M1125.4 86.5 L1135.5 83.6 L1136.6 88.8 L1127.2 91.7Z M1129.9 98.9 L1136.6 97.8 L1137.1 102.2 L1131.0 103.4Z M1142.2 101.1 L1147.9 100.0 L1147.9 111.2 L1143.4 111.2Z M1113.0 116.9 L1126.5 113.0 L1132.1 125.8 L1129.9 129.2 L1120.9 130.3 L1116.4 128.1Z M1105.2 143.8 L1109.7 142.0 L1116.4 159.6 L1129.9 155.1 L1130.3 157.3 L1117.5 162.2 L1116.4 166.3 L1112.3 166.7Z M1120.4 183.8 L1135.5 179.8 L1137.7 186.5 L1122.7 191.0Z M1129.9 205.6 L1143.4 202.2 L1145.2 207.9 L1131.0 211.2Z M1144.5 156.2 L1147.9 155.5 L1147.9 164.0 L1145.2 164.0Z" fill="#d9d0c9" stroke="#c6baae" stroke-width="0.6"/>
<path d="M917.8 -0.3 L963.5 39.5 L1004.5 77.0 L1015.1 107.5 L1061.9 238.7 " fill="none" stroke="#ededed" stroke-width="4.2" stroke-linejoin="round" stroke-linecap="round"/>
<path d="M1147.9 9.4 L1099.5 28.1 L1105.2 44.9 L1135.5 124.7 L1147.9 121.3  M1077.1 89.9 L1147.9 55.7  M1111.9 179.8 L1147.9 167.0 " fill="none" stroke="#eeeeee" stroke-width="3.6" stroke-linejoin="round" stroke-linecap="round"/>
<path d="M974.0 0.9 L983.4 26.6  M965.8 37.7 L1059.6 0.9 " fill="none" stroke="#d6d4d2" stroke-width="4.8" stroke-linejoin="round" stroke-linecap="round"/>
<path d="M974.0 0.9 L983.4 26.6  M965.8 37.7 L1059.6 0.9 " fill="none" stroke="#ffffff" stroke-width="3.8" stroke-linejoin="round" stroke-linecap="round"/>
<path d="M-8.7 8.4 L122.6 18.4 L267.9 29.7  M162.4 -0.3 L162.9 19.6  M260.8 -0.3 L262.7 29.0  M-8.7 61.8 L42.9 64.8 L122.6 70.5 L122.6 18.4  M78.0 68.1 L76.9 142.7  M55.8 104.0 L78.0 105.2  M517.7 18.0 L344.3 2.5 L343.1 29.7 L298.6 34.4  M515.4 -0.3 L513.0 51.2 L509.5 63.0  M554.0 -0.3 L551.7 53.6  M593.8 -0.3 L590.3 56.4  M632.5 -0.3 L629.0 65.3  M667.6 -0.3 L664.1 77.0  M704.4 -0.3 L698.1 82.2  M762.1 -0.3 L754.4 99.3  M796.1 -0.3 L789.5 127.4  M840.4 -0.3 L830.5 146.2  M701.6 58.7 L757.9 59.9  M559.8 114.1 L650.1 108.0 L661.8 112.2 L667.6 122.7 L661.8 175.5 L575.1 157.9 L561.0 146.2 L559.8 114.1  M661.8 175.5 L660.6 232.9  M875.6 0.9 L909.6 23.1 L942.4 50.5 L974.0 80.5 L973.3 112.2 L969.4 232.9  M875.6 2.0 L870.9 88.7 L863.2 194.2  M908.4 25.0 L897.9 232.9  M941.2 51.7 L930.7 232.9  M854.5 197.0 L895.5 195.9  M931.9 201.7 L1001.0 207.3  M1002.2 135.6 L1002.2 210.6 " fill="none" stroke="#d8d5d1" stroke-width="5.2" stroke-linejoin="round" stroke-linecap="round"/>
<path d="M-8.7 8.4 L122.6 18.4 L267.9 29.7  M162.4 -0.3 L162.9 19.6  M260.8 -0.3 L262.7 29.0  M-8.7 61.8 L42.9 64.8 L122.6 70.5 L122.6 18.4  M78.0 68.1 L76.9 142.7  M55.8 104.0 L78.0 105.2  M517.7 18.0 L344.3 2.5 L343.1 29.7 L298.6 34.4  M515.4 -0.3 L513.0 51.2 L509.5 63.0  M554.0 -0.3 L551.7 53.6  M593.8 -0.3 L590.3 56.4  M632.5 -0.3 L629.0 65.3  M667.6 -0.3 L664.1 77.0  M704.4 -0.3 L698.1 82.2  M762.1 -0.3 L754.4 99.3  M796.1 -0.3 L789.5 127.4  M840.4 -0.3 L830.5 146.2  M701.6 58.7 L757.9 59.9  M559.8 114.1 L650.1 108.0 L661.8 112.2 L667.6 122.7 L661.8 175.5 L575.1 157.9 L561.0 146.2 L559.8 114.1  M661.8 175.5 L660.6 232.9  M875.6 0.9 L909.6 23.1 L942.4 50.5 L974.0 80.5 L973.3 112.2 L969.4 232.9  M875.6 2.0 L870.9 88.7 L863.2 194.2  M908.4 25.0 L897.9 232.9  M941.2 51.7 L930.7 232.9  M854.5 197.0 L895.5 195.9  M931.9 201.7 L1001.0 207.3  M1002.2 135.6 L1002.2 210.6 " fill="none" stroke="#ffffff" stroke-width="4.2" stroke-linejoin="round" stroke-linecap="round"/>
<path d="M511.9 50.8 L561.0 56.4 L589.1 58.3 L619.6 64.1 L666.5 78.2 L701.6 83.6 L729.7 87.6 L748.5 100.5 L795.4 130.9 L830.5 147.8 L842.2 173.1 L854.0 205.9 L861.5 234.1" fill="none" stroke="#d8d5d1" stroke-width="6.4" stroke-linejoin="round" stroke-linecap="round"/>
<path d="M511.9 50.8 L561.0 56.4 L589.1 58.3 L619.6 64.1 L666.5 78.2 L701.6 83.6 L729.7 87.6 L748.5 100.5 L795.4 130.9 L830.5 147.8 L842.2 173.1 L854.0 205.9 L861.5 234.1" fill="none" stroke="#ffffff" stroke-width="5.4" stroke-linejoin="round" stroke-linecap="round"/>
<path d="M1035.7 -9.7 L1129.9 238.7 " fill="none" stroke="#b5bd6a" stroke-width="9.2" stroke-linejoin="round" stroke-linecap="round"/>
<path d="M1035.7 -9.7 L1129.9 238.7 " fill="none" stroke="#f7fabf" stroke-width="7.8" stroke-linejoin="round" stroke-linecap="round"/>
<circle cx="202.2" cy="159.1" r="49" fill="#e0dfdf"/><circle cx="202.2" cy="159.1" r="45.6" fill="#cdebb0"/>
<path d="M-8.7 182.5 L160.1 119.7 L190.5 106.1 L208.1 92.3 L291.8 0.2  M-8.7 182.5 L19.4 176.6 L49.9 175.0 L85.1 177.8 L117.9 184.4 L146.0 195.4 L169.4 208.7 L190.5 221.9 L208.1 234.1  M310.1 -8.5 L281.0 88.7 L267.9 127.4 L261.5 149.7 L263.2 166.1 L269.0 198.9 L279.6 234.1 " fill="none" stroke="#d4735c" stroke-width="11.4" stroke-linejoin="round"/>
<circle cx="202.2" cy="159.1" r="53.2" fill="none" stroke="#d4735c" stroke-width="10.8"/>
<path d="M-8.7 182.5 L160.1 119.7 L190.5 106.1 L208.1 92.3 L291.8 0.2  M-8.7 182.5 L19.4 176.6 L49.9 175.0 L85.1 177.8 L117.9 184.4 L146.0 195.4 L169.4 208.7 L190.5 221.9 L208.1 234.1  M310.1 -8.5 L281.0 88.7 L267.9 127.4 L261.5 149.7 L263.2 166.1 L269.0 198.9 L279.6 234.1 " fill="none" stroke="#f9b29c" stroke-width="9.8" stroke-linejoin="round"/>
<circle cx="202.2" cy="159.1" r="53.2" fill="none" stroke="#f9b29c" stroke-width="9.2"/>
<path d="M0.7 191.4 L26.5 182.5 L66.3 183.7 L113.2 190.7 L160.1 211.8 L183.5 228.2 " fill="none" stroke="#b49bc8" stroke-width="2" stroke-dasharray="6 3 1.5 3" opacity="0.75"/>
<g transform="translate(92.8,142.7) rotate(160)"><path d="M-4.6 0 H2" stroke="#55180e" stroke-width="1.1" fill="none"/><path d="M0.8 -2.4 L5 0 L0.8 2.4 Z" fill="#55180e"/></g>
<g transform="translate(45.7,175.9) rotate(0)"><path d="M-4.6 0 H2" stroke="#55180e" stroke-width="1.1" fill="none"/><path d="M0.8 -2.4 L5 0 L0.8 2.4 Z" fill="#55180e"/></g>
<g transform="translate(154.2,139.1) rotate(100)"><path d="M-4.6 0 H2" stroke="#55180e" stroke-width="1.1" fill="none"/><path d="M0.8 -2.4 L5 0 L0.8 2.4 Z" fill="#55180e"/></g>
<g transform="translate(280.1,18.4) rotate(132)"><path d="M-4.6 0 H2" stroke="#55180e" stroke-width="1.1" fill="none"/><path d="M0.8 -2.4 L5 0 L0.8 2.4 Z" fill="#55180e"/></g>
<g transform="translate(283.1,77.0) rotate(-75)"><path d="M-4.6 0 H2" stroke="#55180e" stroke-width="1.1" fill="none"/><path d="M0.8 -2.4 L5 0 L0.8 2.4 Z" fill="#55180e"/></g>
<g transform="translate(253.3,180.2) rotate(-70)"><path d="M-4.6 0 H2" stroke="#55180e" stroke-width="1.1" fill="none"/><path d="M0.8 -2.4 L5 0 L0.8 2.4 Z" fill="#55180e"/></g>
<text transform="translate(52.2,15.6) rotate(5.5)" text-anchor="start" font-family="Liberation Sans" font-size="9.4" fill="#222" stroke="#fff" stroke-width="2.2" paint-order="stroke" stroke-linejoin="round" >Зумрад улица</text>
<text transform="translate(368.2,8.1) rotate(5)" text-anchor="start" font-family="Liberation Sans" font-size="9.4" fill="#222" stroke="#fff" stroke-width="2.2" paint-order="stroke" stroke-linejoin="round" >Ул. Барокат</text>
<text transform="translate(44.0,68.1) rotate(0)" text-anchor="start" font-family="Liberation Sans" font-size="9.4" fill="#222" stroke="#fff" stroke-width="2.2" paint-order="stroke" stroke-linejoin="round" >т</text>
<text transform="translate(1.2,104.0) rotate(0)" text-anchor="start" font-family="Liberation Sans" font-size="9.4" fill="#222" stroke="#fff" stroke-width="2.2" paint-order="stroke" stroke-linejoin="round" font-size="9">Р</text>
<path id="fh" d="M83.2 182.5 Q 127.2 189.1 183.5 216.5" fill="none"/>
<text font-family="Liberation Sans" font-size="10.4" font-style="italic" fill="#331710" stroke="#331710" stroke-width="0.25"><textPath href="#fh">Farg‘ona halqa yo‘li</textPath></text>
<rect x="249.8" y="115.7" width="39.1" height="18.7" rx="1.5" fill="#fbd6cb" stroke="#d9917c" stroke-width="0.8"/>
<text x="269.4" y="129.3" text-anchor="middle" font-family="Liberation Sans" font-size="10.6" fill="#6b3020">4K850</text>
<text x="205.1" y="68.1" font-family="Liberation Sans" font-size="14" font-weight="700" fill="#1a8fd6">P</text>
<rect x="93.3" y="123.2" width="6" height="6" fill="#1a8fd6"/>
<g transform="translate(126.5,114.1)" stroke="#ac39ac" fill="none" stroke-width="1"><path d="M0 1 h9 l-1 5.4 h-6.6 z M1 3 h7.6 M1.6 5 h6.6 M3 1 v5 M5 1 v5 M7 1 v5 M9 1 l1.6 -2.4 h1.4"/><circle cx="2.6" cy="9" r="1" fill="#ac39ac"/><circle cx="7" cy="9" r="1" fill="#ac39ac"/></g>
<text transform="translate(596.2,11.9) rotate(-86)" text-anchor="start" font-family="Liberation Sans" font-size="9.4" fill="#222" stroke="#fff" stroke-width="2.2" paint-order="stroke" stroke-linejoin="round" >Ул.</text>
<text transform="translate(636.5,16.6) rotate(-86)" text-anchor="start" font-family="Liberation Sans" font-size="9.4" fill="#222" stroke="#fff" stroke-width="2.2" paint-order="stroke" stroke-linejoin="round" >Ул.</text>
<text transform="translate(670.7,40.7) rotate(-86)" text-anchor="start" font-family="Liberation Sans" font-size="9.4" fill="#222" stroke="#fff" stroke-width="2.2" paint-order="stroke" stroke-linejoin="round" >Ул. 5-пр-д</text>
<text transform="translate(708.2,24.3) rotate(-86)" text-anchor="start" font-family="Liberation Sans" font-size="9.4" fill="#222" stroke="#fff" stroke-width="2.2" paint-order="stroke" stroke-linejoin="round" >Ул. Ус</text>
<text transform="translate(762.6,36.5) rotate(-86)" text-anchor="start" font-family="Liberation Sans" font-size="9.4" fill="#222" stroke="#fff" stroke-width="2.2" paint-order="stroke" stroke-linejoin="round" >Ул. Усто</text>
<text transform="translate(798.2,70.5) rotate(-86)" text-anchor="start" font-family="Liberation Sans" font-size="9.4" fill="#222" stroke="#fff" stroke-width="2.2" paint-order="stroke" stroke-linejoin="round" >6-пр-д Кир Таги</text>
<text transform="translate(744.3,100.9) rotate(34)" text-anchor="start" font-family="Liberation Sans" font-size="9.4" fill="#222" stroke="#fff" stroke-width="2.2" paint-order="stroke" stroke-linejoin="round" >Ул.  Кир таги</text>
<text transform="translate(871.6,135.2) rotate(-86)" text-anchor="start" font-family="Liberation Sans" font-size="9.4" fill="#222" stroke="#fff" stroke-width="2.2" paint-order="stroke" stroke-linejoin="round" >8-пр-д Кир Таги</text>
<text transform="translate(904.4,187.7) rotate(-86)" text-anchor="start" font-family="Liberation Sans" font-size="9.4" fill="#222" stroke="#fff" stroke-width="2.2" paint-order="stroke" stroke-linejoin="round" >9-пр-д Кир Таги</text>
<text transform="translate(937.2,205.2) rotate(-86)" text-anchor="start" font-family="Liberation Sans" font-size="9.4" fill="#222" stroke="#fff" stroke-width="2.2" paint-order="stroke" stroke-linejoin="round" >10-пр-д Кир Таги</text>
<text transform="translate(971.0,228.7) rotate(-86)" text-anchor="start" font-family="Liberation Sans" font-size="9.4" fill="#222" stroke="#fff" stroke-width="2.2" paint-order="stroke" stroke-linejoin="round" >11-пр-д Кир Таги</text>
<text transform="translate(1004.5,213.4) rotate(-86)" text-anchor="start" font-family="Liberation Sans" font-size="9.4" fill="#222" stroke="#fff" stroke-width="2.2" paint-order="stroke" stroke-linejoin="round" >р Таги</text>
<text transform="translate(1015.1,102.3) rotate(72)" text-anchor="start" font-family="Liberation Sans" font-size="9.4" fill="#222" stroke="#fff" stroke-width="2.2" paint-order="stroke" stroke-linejoin="round" >Ул. Машъал</text>
<text transform="translate(1101.8,44.2) rotate(71)" text-anchor="start" font-family="Liberation Sans" font-size="9.4" fill="#222" stroke="#fff" stroke-width="2.2" paint-order="stroke" stroke-linejoin="round" >Ул. Санаткорлар</text>
<text transform="translate(1144.0,12.6) rotate(72)" font-family="Liberation Sans" font-size="9.4" fill="#222" stroke="#fff" stroke-width="2.2" paint-order="stroke" stroke-linejoin="round">У</text>
<rect x="572.4" y="220.8" width="4" height="4" fill="#f4f4f4" stroke="#555" stroke-width="0.7"/><circle cx="574.4" cy="222.8" r="0.7" fill="#555"/>
<rect x="572.6" y="220.8" width="4" height="4" fill="#f4f4f4" stroke="#555" stroke-width="0.7"/><circle cx="574.6" cy="222.8" r="0.7" fill="#555"/>
<path d="M559.9 229.4 L574.4 222.8 " stroke="#8a8a8a" stroke-width="0.5" fill="none"/>
<path d="M554.0 229.4 L574.6 223.5 L600.8 228.2 " stroke="#8a8a8a" stroke-width="0.5" fill="none"/>
<g transform="translate(640.5,145.0)"><ellipse cx="11" cy="-9.5" rx="14.5" ry="4.6" transform="rotate(-37 11 -9.5)" fill="#000" opacity="0.26" filter="url(#mb)"/><defs><linearGradient id="mg" x1="0" y1="0" x2="0" y2="1"><stop offset="0" stop-color="#3f95d6"/><stop offset="1" stop-color="#2272b6"/></linearGradient><filter id="mb"><feGaussianBlur stdDeviation="1.6"/></filter></defs><path d="M0 0 C-2.2 -7.5 -11.6 -16 -11.6 -26 A11.6 11.6 0 0 1 11.6 -26 C11.6 -16 2.2 -7.5 0 0 Z" fill="url(#mg)" stroke="#2169a8" stroke-width="0.9"/><circle cx="0" cy="-25.6" r="4" fill="#fff"/></g>
</svg>

</div>
<!-- leaflet controls -->
<div class="a" style="left:70px;top:355.8px;width:33.4px;height:64px;border:1.7px solid rgba(0,0,0,0.24);border-radius:5px;background-clip:padding-box;z-index:4"></div>
<div class="a" style="left:71.6px;top:357.4px;width:30px;height:61px;border-radius:3px;background:#fff;z-index:4"></div>
<div class="a" style="left:71.6px;top:387.4px;width:30px;height:1px;background:#ccc;z-index:4"></div>
<div class="a" style="left:70.4px;top:431px;width:44.6px;height:44.6px;border-radius:7px;background:#fff;box-shadow:0 1px 5px rgba(0,0,0,0.28);z-index:4"></div>
<svg style="left:0;top:0;z-index:5" width="1280" height="1024" viewBox="0 0 1280 1024">
 <path d="M81 372.8 h11.6 M86.8 367 v11.6" stroke="#000" stroke-width="2.3" fill="none"/>
 <path d="M81 403 h11.4" stroke="#000" stroke-width="2.3" fill="none"/>
 <!-- layers icon -->
 <g transform="translate(92.7,453.4)">
  <path d="M-13 5.6 L0 11.6 L13 5.6 L0 -0.4 Z" fill="#bcbcbc" stroke="#a4a4a4" stroke-width="0.5"/>
  <path d="M-13 1 L0 7 L13 1 L0 -5 Z" fill="#d2d2d2" stroke="#b4b4b4" stroke-width="0.5"/>
  <path d="M-13 -3.8 L0 2.2 L13 -3.8 L0 -9.8 Z" fill="#ececec" stroke="#c2c2c2" stroke-width="0.5"/>
 </g>
 <!-- attribution -->
 <path d="M1037.6 557.6 H1205 V574 H1037.6 Z" fill="#fff" fill-opacity="0.82"/>
 <rect x="1042" y="561.6" width="12" height="4" fill="#4c7be1"/><rect x="1042" y="565.6" width="12" height="4" fill="#ffd500"/>
 <text x="1058" y="569.4" font-family="Liberation Sans" font-size="12" fill="#0078a8">Leaflet</text>
 <text x="1096.4" y="569.4" font-family="Liberation Sans" font-size="12" fill="#333">| © OpenStreetMap</text>
</svg>
<!-- form icons -->
<svg style="left:0;top:0;z-index:5" width="1280" height="1024" viewBox="0 0 1280 1024">
 <defs>
  <g id="iglobe"><circle r="8" fill="#212529"/>
   <g stroke="#f0f3fb" stroke-width="1.05" fill="none"><ellipse rx="3.4" ry="7.6"/><path d="M-8 -2.7 H8 M-8 2.7 H8"/></g></g>
  <g id="ibank" fill="#212529"><path d="M0 -8.2 L8.4 -3.6 V-2.2 H-8.4 V-3.6 Z"/>
   <rect x="-6.6" y="-1.4" width="2.1" height="6"/><rect x="-3.1" y="-1.4" width="2.1" height="6"/><rect x="1" y="-1.4" width="2.1" height="6"/><rect x="4.5" y="-1.4" width="2.1" height="6"/>
   <rect x="-7.4" y="4.6" width="14.8" height="1.3"/><rect x="-8.4" y="6.4" width="16.8" height="1.7"/></g>
  <g id="icase" fill="#212529"><path d="M-3.6 -7.4 h7.2 a1.2 1.2 0 0 1 1.2 1.2 v1.4 h2.4 a1.4 1.4 0 0 1 1.4 1.4 v3.4 h-17.2 v-3.4 a1.4 1.4 0 0 1 1.4 -1.4 h2.4 v-1.4 a1.2 1.2 0 0 1 1.2 -1.2 z M-2.6 -5.6 v0.8 h5.2 v-0.8 z"/>
   <path d="M-8.6 1.2 h6.2 v1.4 h4.8 v-1.4 h6.2 v4.8 a1.4 1.4 0 0 1 -1.4 1.4 h-14.4 a1.4 1.4 0 0 1 -1.4 -1.4 z"/></g>
  <g id="ilist" fill="#212529"><rect x="-2.8" y="-6.4" width="11.4" height="1.8" rx="0.6"/><rect x="-2.8" y="-0.9" width="11.4" height="1.8" rx="0.6"/><rect x="-2.8" y="4.6" width="11.4" height="1.8" rx="0.6"/>
   <text x="-8.8" y="-3.2" font-family="Liberation Sans" font-size="6.6" font-weight="700">1</text><text x="-8.8" y="4" font-family="Liberation Sans" font-size="6.6" font-weight="700">2</text></g>
 </defs>
 <use href="#iglobe" x="79.4" y="646.2"/><use href="#iglobe" x="661.4" y="646.2"/>
 <use href="#ibank" x="79.4" y="783"/><use href="#ibank" x="661.4" y="783"/>
 <use href="#icase" x="79.4" y="868.8"/><use href="#ilist" x="661.4" y="869"/>
 <!-- google G -->
 <g transform="translate(186.6,697.2) scale(1.07) translate(-186,-696)"><path d="M192.2 694.6 H186.8 V697 H189.8 A3.9 3.9 0 1 1 188.6 692.4 L190.4 690.6 A6.4 6.4 0 1 0 192.4 696.4 Z" fill="#dc3545"/></g>
 <!-- yandex Ya -->
 <path d="M302.2 690 H304.2 V703 H302.2 V698.2 H300.6 L298.2 703 H296 L298.8 697.8 A3.6 3.6 0 0 1 296.6 694.2 C296.6 691.4 298.4 690 300.8 690 Z M302.2 691.8 H301 C299.6 691.8 298.7 692.6 298.7 694.2 C298.7 695.8 299.6 696.5 301 696.5 H302.2 Z" fill="#ffc107" fill-rule="evenodd"/>
</svg>
<!-- ===== PiP YOUTUBE WINDOW ===== -->
<div class="a" style="left:800px;top:700px;width:363px;height:284px;background:#fff;z-index:6"></div>
<div class="a" style="left:800px;top:700px;width:363px;height:34px;background:#202124;z-index:6"></div>
<div class="a" style="left:800px;top:734px;width:363px;height:184px;background:#000;z-index:6"></div>
<svg style="left:818px;top:756.5px;z-index:7;overflow:hidden" width="327" height="139" viewBox="0 0 327 139">
 <defs><filter id="vb" x="-5%" y="-5%" width="110%" height="110%"><feGaussianBlur stdDeviation="8.5"/></filter>
 <filter id="vb2" x="-5%" y="-5%" width="110%" height="110%"><feGaussianBlur stdDeviation="3.2"/></filter>
 <linearGradient id="wallg" x1="0" y1="0" x2="1" y2="0"><stop offset="0" stop-color="#4b4138"/><stop offset="0.14" stop-color="#62574b"/><stop offset="0.3" stop-color="#75685a"/><stop offset="0.42" stop-color="#6a5e51"/><stop offset="0.62" stop-color="#5f5348"/><stop offset="0.9" stop-color="#51463d"/><stop offset="1" stop-color="#473d35"/></linearGradient>
 <clipPath id="vc"><rect x="22" y="25" width="2278" height="968"/></clipPath></defs>
 <g transform="scale(0.14357) translate(-22,-25)" clip-path="url(#vc)">
  <rect x="0" y="0" width="2320" height="1010" fill="url(#wallg)"/>
  <g filter="url(#vb)">
   <rect x="22" y="25" width="40" height="300" fill="#6f6456"/>
   <rect x="300" y="25" width="600" height="260" fill="#776a5b"/>
   <rect x="1135" y="25" width="260" height="500" fill="#5a4f44"/>
   <!-- hanging object -->
   <path d="M800 20 h40 l8 200 l10 70 l-30 45 l-36 -35 l8 -80 z" fill="#2a221e"/>
   <!-- fig2 -->
   <path d="M575 990 L590 560 L640 420 L790 400 L880 520 L915 700 L900 990 Z" fill="#56534a"/>
   <path d="M600 430 L780 400 L800 560 L700 640 L610 580 Z" fill="#66645a"/>
   <path d="M760 650 L905 640 L905 990 L740 990 Z" fill="#48453d"/>
   <ellipse cx="708" cy="370" rx="58" ry="62" fill="#604b3d"/>
   <ellipse cx="705" cy="400" rx="46" ry="26" fill="#3d3029"/>
   <path d="M615 330 Q620 240 700 235 Q780 240 782 330 Q700 290 615 330 Z" fill="#706e5e"/>
   <!-- fig3 white robe -->
   <path d="M905 990 L930 640 L1000 420 L1090 340 L1160 320 L1290 340 L1390 430 L1370 640 L1290 990 Z" fill="#a19d94"/>
   <path d="M1215 400 L1335 390 L1350 560 L1290 640 L1215 620 Z" fill="#b9b5ad"/>
   <path d="M1130 330 L1180 300 L1200 640 L1150 990 L1100 990 L1120 640 Z" fill="#b0aca3"/>
   <path d="M1135 620 L1180 600 L1175 990 L1135 990 Z" fill="#807b73"/>
   <path d="M1180 640 L1270 660 L1250 990 L1180 990 Z" fill="#96928a"/>
   <ellipse cx="1292" cy="325" rx="58" ry="68" fill="#6b5343"/>
   <ellipse cx="1292" cy="372" rx="46" ry="28" fill="#43352c"/>
   <path d="M1150 250 Q1160 155 1270 150 Q1385 160 1380 240 Q1330 290 1250 275 Q1190 290 1150 250 Z" fill="#a5a198"/>
   <!-- fig5 striped -->
   <path d="M1890 990 L1870 640 L1900 470 L2030 470 L2110 560 L2160 780 L2180 990 Z" fill="#a69c90"/>
   <g stroke="#2c2522" stroke-width="30" fill="none"><path d="M1990 480 L2090 520"/><path d="M1960 545 L2125 605"/><path d="M1950 620 L2140 690"/><path d="M1945 700 L2155 775"/><path d="M1945 780 L2165 860"/><path d="M1950 860 L2175 940"/><path d="M1960 940 L2100 990"/></g>
   <path d="M1850 440 L1960 420 L2030 470 L1990 700 L1930 820 L1880 700 Z" fill="#9a8d78"/>
   <ellipse cx="1850" cy="368" rx="78" ry="74" fill="#85664f"/>
   <ellipse cx="1842" cy="425" rx="56" ry="26" fill="#3b2d25"/>
   <path d="M1760 270 Q1770 190 1860 185 Q1965 195 1972 290 Q1960 330 1930 330 Q1870 280 1760 300 Z" fill="#a59a85"/>
   <path d="M1965 380 L2060 390 L2065 460 L1975 450 Z" fill="#2a2420"/>
   <path d="M1975 130 h55 l15 150 l-25 60 l-40 -30 z" fill="#241e1b"/>
   <!-- fig4 centre -->
   <path d="M1255 990 L1290 700 L1370 540 L1500 470 L1760 480 L1860 600 L1930 990 Z" fill="#553f35"/>
   <path d="M1300 700 L1390 560 L1440 990 L1270 990 Z" fill="#4a362e"/>
   <path d="M1490 640 L1690 650 L1700 990 L1480 990 Z" fill="#5a5747"/>
   <path d="M1385 470 L1450 410 L1700 400 L1790 470 L1760 600 L1660 700 L1520 700 L1420 620 Z" fill="#716e5d"/>
   <g stroke="#4f4c3e" stroke-width="16" fill="none"><path d="M1430 520 Q1580 640 1740 520"/><path d="M1460 590 Q1590 690 1720 590"/></g>
   <ellipse cx="1568" cy="335" rx="96" ry="104" fill="#7c5e4b"/>
   <path d="M1480 300 h70 M1590 300 h70" stroke="#33261f" stroke-width="16"/>
   <ellipse cx="1570" cy="408" rx="82" ry="36" fill="#2f2520"/>
   <path d="M1430 240 Q1420 110 1570 95 Q1730 105 1728 250 Q1700 300 1690 290 Q1570 200 1450 290 Z" fill="#5b5747"/>
   <path d="M1470 150 Q1560 100 1680 150 Q1570 130 1470 150 Z" fill="#7b7760" stroke="#7b7760" stroke-width="20"/>
   <path d="M1410 280 L1460 270 L1450 400 L1405 380 Z" fill="#3c332b"/>
   <path d="M1680 280 L1725 270 L1720 400 L1680 400 Z" fill="#3c332b"/>
   <!-- fig1 foreground -->
   <path d="M350 560 L560 590 L700 760 L800 990 L300 990 Z" fill="#9c978d"/>
   <path d="M470 650 L560 640 L560 990 L450 990 Z" fill="#8a857c"/>
   <path d="M22 300 L260 330 L440 560 L420 800 L330 990 L22 990 Z" fill="#858a82"/>
   <g stroke="#666a64" stroke-width="22" fill="none"><path d="M40 420 Q200 480 330 620"/><path d="M30 560 Q160 620 290 780"/><path d="M30 720 Q130 780 230 960"/><path d="M120 360 Q300 420 400 560"/></g>
   <path d="M480 420 L560 370 L640 350 L655 420 L600 520 L560 590 L480 560 Z" fill="#8a6a57"/>
   <path d="M300 330 L430 310 L520 420 L500 520 L400 520 L320 440 Z" fill="#85807d"/>
   <path d="M340 360 L420 340 L470 420 L440 480 L370 450 Z" fill="#6a625f"/>
   <path d="M22 240 L150 215 L300 240 L330 330 L200 310 L22 330 Z" fill="#7b8078"/>
   <path d="M60 210 Q90 100 300 65 Q470 80 580 250 Q620 330 600 400 Q560 430 520 400 Q440 250 280 215 Q150 200 60 210 Z" fill="#878b82"/>
   <path d="M130 170 Q280 110 430 170 Q520 240 560 340 Q470 210 300 180 Q200 170 130 170 Z" fill="#747970"/>
  </g>
  <rect x="0" y="0" width="2320" height="1010" fill="#120c08" opacity="0.10"/>
  <!-- window bars -->
  <g fill="#e6e2da" filter="url(#vb2)">
   <rect x="1520" y="28" width="55" height="9"/><rect x="1520" y="46" width="55" height="9"/><rect x="1520" y="64" width="55" height="9"/>
   <rect x="1590" y="28" width="60" height="9"/><rect x="1590" y="46" width="60" height="9"/><rect x="1590" y="64" width="60" height="9"/><rect x="1590" y="82" width="60" height="9"/>
   <rect x="1665" y="28" width="50" height="9"/><rect x="1665" y="46" width="50" height="9"/><rect x="1665" y="64" width="50" height="9"/><rect x="1665" y="82" width="50" height="9"/><rect x="1665" y="100" width="50" height="9"/><rect x="1672" y="118" width="43" height="9"/>
   <rect x="1690" y="300" width="22" height="100" opacity="0.7"/>
  </g>
  <!-- logo -->
  <g stroke="#fff" stroke-width="7" fill="none" stroke-linejoin="miter"><path d="M2110 48 L2186 122 L2110 196 L2034 122 Z"/><path d="M2076 122 L2110 88 L2144 122 L2110 156 Z M2093 105 L2127 139 M2127 105 L2110 122" stroke-width="6"/></g>
  <rect x="2026" y="213" width="168" height="15" fill="#fff" opacity="0.9"/>
 </g>
</svg>
<!-- progress -->
<div class="a" style="left:800px;top:915px;width:262px;height:3px;background:#ff0033;z-index:8"></div>
<div class="a" style="left:1062px;top:915px;width:83.5px;height:3px;background:#9d9d9d;z-index:8"></div>
<div class="a" style="left:1056.6px;top:910.6px;width:12.4px;height:12.4px;border-radius:50%;background:#ff0033;z-index:9"></div>
<svg style="left:0;top:0;z-index:9" width="1280" height="1024" viewBox="0 0 1280 1024">
 <g stroke="#bdc1c6" stroke-width="1.4" fill="none" stroke-linecap="round">
  <circle cx="816.4" cy="713.6" r="1.7"/><path d="M820.6 713.6 H825.8"/>
  <circle cx="824" cy="720.2" r="1.7"/><path d="M814.6 720.2 H819.8"/>
 </g>
</svg>
<!-- ===== WINDOWS TASKBAR ===== -->
<div class="a" id="taskbar" style="z-index:10"></div>
<div class="a" style="left:52px;top:985px;width:41px;height:38px;background:linear-gradient(180deg,#66696c 0%,#7c7e80 55%,#8f9192 100%);border:1px solid #c4c5c6;z-index:11"></div>
<div class="a" style="left:93.4px;top:985px;width:4.6px;height:38px;background:#6c6f72;border:1px solid #c4c5c6;border-left:0;z-index:11"></div>
<div class="a" style="left:101px;top:985px;width:46px;height:38px;background:#44484c;border:1px solid #5a5d60;z-index:11"></div>
<div class="a" style="left:150px;top:985px;width:46px;height:38px;background:#44484c;border:1px solid #5a5d60;z-index:11"></div>
<svg style="left:0;top:984px;z-index:12" width="1280" height="40" viewBox="0 984 1280 40">
 <!-- windows logo -->
 <path d="M13.8 996.6 L22.2 995.4 V1003.4 H13.8 Z M23.2 995.3 L34.4 993.7 V1003.4 H23.2 Z M13.8 1004.4 H22.2 V1012.4 L13.8 1011.2 Z M23.2 1004.4 H34.4 V1014.1 L23.2 1012.5 Z" fill="#fff"/>
 <!-- chrome -->
 <g transform="translate(72,1003.8) scale(1.2)">
  <circle r="10" fill="#fff"/>
  <path d="M-8.66 -5 A10 10 0 0 1 8.66 -5 L0 -5 L0 0 Z" fill="#ea4335"/>
  <path d="M8.66 -5 A10 10 0 0 1 0 10 L4.33 2.5 L0 0 Z" fill="#fbbc04"/>
  <path d="M0 10 A10 10 0 0 1 -8.66 -5 L-4.33 2.5 L0 0 Z" fill="#34a853"/>
  <path d="M0 -5 L8.66 -5 L4.33 2.5 Z" fill="#fbbc04"/><path d="M0 -5 L4.33 2.5 L-4.33 2.5 Z" fill="#ea4335"/>
  <path d="M-8.66 -5 L0 -5 L-4.33 2.5 Z" fill="#ea4335"/>
  <path d="M4.33 2.5 L0 10 L-4.33 2.5 Z" fill="#34a853"/>
  <path d="M-8.66 -5 L-4.33 2.5 L0 -5 Z" fill="#ea4335"/>
  <circle r="4.9" fill="#fff"/><circle r="3.9" fill="#4285f4"/>
 </g>
 <!-- cloud app -->
 <g transform="translate(124,1004)" fill="none" stroke="#2a63c6" stroke-width="1.5" stroke-linejoin="round">
  <path d="M-5 5.6 H-4.4 M4.4 5.6 H5.2 A3.6 3.6 0 0 0 6 -1.5 A5 5 0 0 0 -3.6 -3.6 A3.4 3.4 0 0 0 -7.4 -0.2 A3 3 0 0 0 -6.4 5.4"/>
  <path d="M-3 4 v2.4 M0 4 v2.4 M3 4 v2.4" stroke-width="1.2"/>
 </g>
 <!-- telegram -->
 <circle cx="172.8" cy="1004" r="11" fill="#2ca5e0"/>
 <path d="M166.6 1003.8 L179 999 C179.6 998.8 180 999.2 179.8 1000 L177.8 1009.4 C177.6 1010 177.2 1010.2 176.6 1009.8 L173.4 1007.6 L171.8 1009.2 C171.6 1009.4 171.4 1009.4 171.4 1009 L171.6 1006.4 L177.2 1001.2 L170.2 1005.6 L167 1004.6 C166.4 1004.4 166.4 1004 166.6 1003.8 Z" fill="#fff"/>
 <!-- weather -->
 <g>
  <circle cx="904.6" cy="997.2" r="5.6" fill="#f3b52e"/>
  <path d="M891.8 1013.4 H906.4 A4.6 4.6 0 0 0 906.8 1004.2 A6.4 6.4 0 0 0 895 1002.4 A5.6 5.6 0 0 0 891.8 1013.4 Z" fill="#c3daf8"/>
  <path d="M891.8 1013.4 H906.4 A4.6 4.6 0 0 0 910.6 1010 C904 1012 896 1011 888.4 1008.6 A5.6 5.6 0 0 0 891.8 1013.4 Z" fill="#96bdf0"/>
  <circle cx="904.8" cy="996.8" r="5" fill="#e23c3c"/>
  <text x="904.8" y="1000" text-anchor="middle" font-family="Liberation Sans" font-size="8.4" font-weight="700" fill="#fff">1</text>
 </g>
 <!-- chevron -->
 <path d="M1053.4 1007.2 L1058.5 1002 L1063.6 1007.2" fill="none" stroke="#fff" stroke-width="1.3"/>
 <!-- wifi -->
 <g fill="none" stroke="#fff" stroke-width="1.2" stroke-linecap="round">
  <path d="M1078.6 1011 A10.6 10.6 0 0 1 1089.2 1000.4"/><path d="M1081.4 1011 A7.8 7.8 0 0 1 1089.2 1003.2"/><path d="M1084.2 1011 A5 5 0 0 1 1089.2 1006"/>
 </g>
 <circle cx="1088" cy="1010" r="1.5" fill="#fff"/>
 <!-- volume -->
 <path d="M1100 1001.6 H1102.6 L1106 998.4 V1010 L1102.6 1006.8 H1100 Z" fill="none" stroke="#fff" stroke-width="1.1" stroke-linejoin="round"/>
 <g fill="none" stroke="#fff" stroke-width="1.1" stroke-linecap="round"><path d="M1108.4 1001.6 A3.6 3.6 0 0 1 1108.4 1006.8"/><path d="M1110.6 999.4 A6.6 6.6 0 0 1 1110.6 1009" opacity="0.9"/><path d="M1112.8 997.4 A9.4 9.4 0 0 1 1112.8 1011" opacity="0.55"/></g>
 <!-- action center -->
 <path d="M1233 996.2 H1248.6 V1008 H1238.4 L1235.2 1011.6 V1008 H1233 Z" fill="#fff"/>
 <g stroke="#1a2028" stroke-width="0.9"><path d="M1235.6 999.4 H1246 M1235.6 1002 H1246 M1235.6 1004.6 H1243"/></g>
 <circle cx="1248.8" cy="1011" r="7" fill="#1a2028" stroke="#9aa0a6" stroke-width="1.3"/>
 <text x="1248.8" y="1015" text-anchor="middle" font-family="Liberation Sans" font-size="10.6" fill="#fff">3</text>
</svg>

</body></html>
